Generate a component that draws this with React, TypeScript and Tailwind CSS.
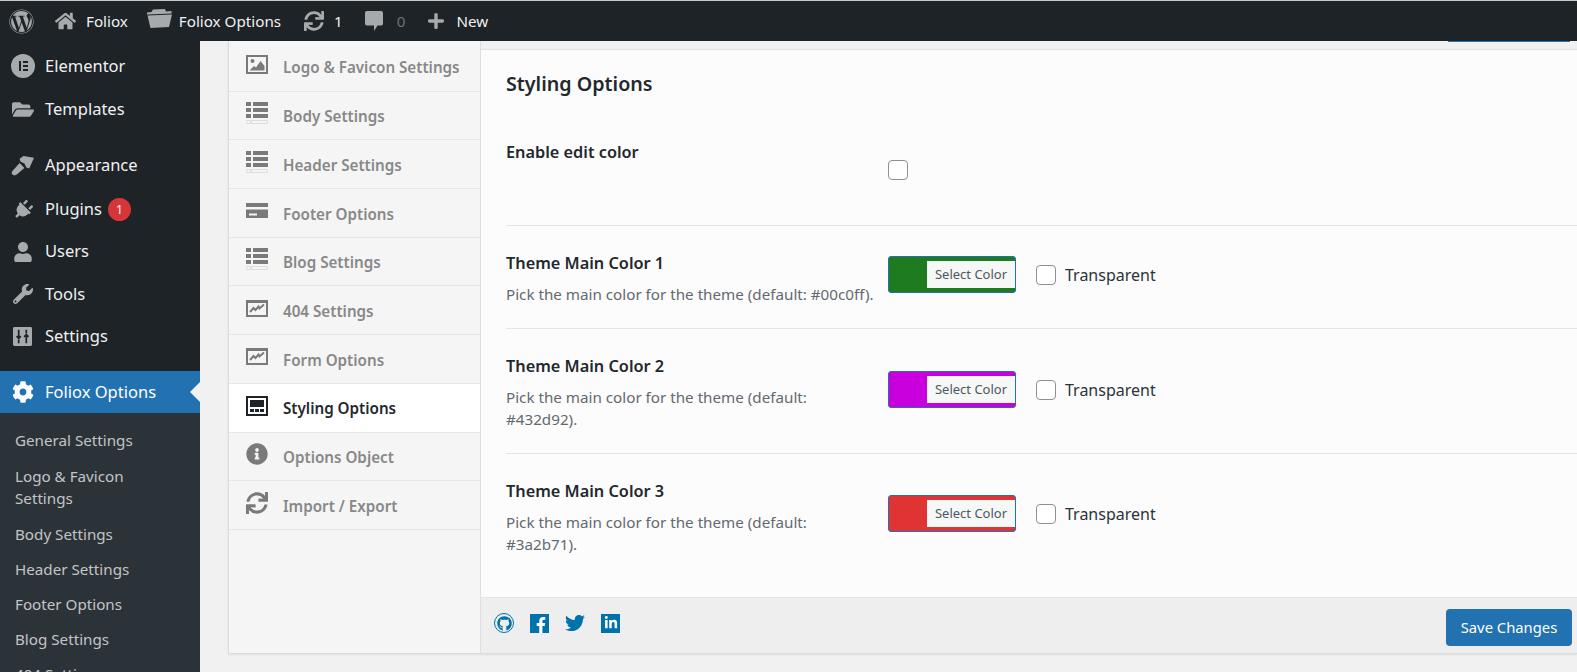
import type { ReactNode } from "react"
import {
  FaWordpress,
  FaHome,
  FaFolderOpen,
  FaSync,
  FaPlus,
  FaPlug,
  FaUser,
  FaWrench,
  FaCog,
  FaInfoCircle,
  FaTwitter,
  FaFacebookF,
  FaLinkedinIn,
  FaGithub,
} from "react-icons/fa"

function ElementorIcon() {
  return (
    <svg viewBox="0 0 24 24" className="h-6 w-6" fill="currentColor">
      <path
        fillRule="evenodd"
        d="M12 0a12 12 0 1 0 0 24 12 12 0 0 0 0-24ZM8 7h2v10H8V7Zm4 0h5v2h-5V7Zm0 4h5v2h-5v-2Zm0 4h5v2h-5v-2Z"
      />
    </svg>
  )
}

function BrushIcon() {
  return (
    <svg viewBox="0 0 24 24" className="h-[23px] w-[23px]" fill="currentColor">
      <path d="M13 2 24 4l-5 11-3-1-2-4-4-2-1-3z" />
      <path d="M9 9.500 14 14.500 6 21.500c-1.500 1.200-3.500 1-4.500 0s-1-2.800.2-4z" />
    </svg>
  )
}

function FolderIcon() {
  return (
    <svg viewBox="0 0 25 19" className="mr-[7px] h-[19px] w-[25px] -translate-y-[2px]" fill="currentColor">
      <path d="M0 3.500 4.500 3 6 .5 18 0l1 2.500 5.500-.5v2.500L0 5.500z" />
      <path d="M.5 6.500 25 5.500 22 18 3.500 19z" />
    </svg>
  )
}

function CommentIcon() {
  return (
    <svg viewBox="0 0 20 24" className="mr-[14px] h-[22px] w-[18px]" fill="currentColor">
      <path d="M2 1h16a2 2 0 0 1 2 2v12a2 2 0 0 1-2 2h-4l-4 6v-6H2a2 2 0 0 1-2-2V3a2 2 0 0 1 2-2z" />
    </svg>
  )
}

function SlidersIcon() {
  return (
    <svg viewBox="0 0 20 20" className="h-[19px] w-[19px]">
      <rect width="20" height="20" rx="1.500" fill="currentColor" />
      <path d="M6 3v9M3.800 9.600 6 12l2.200-2.400M6 13.500v3.500M14 17V8M11.800 10.400 14 8l2.200 2.400M14 6.500V3" stroke="#1d2327" strokeWidth="1.800" fill="none" />
    </svg>
  )
}

function PictureIcon() {
  return (
    <svg viewBox="0 0 22 19" className="h-[19px] w-[22px]" fill="currentColor">
      <path fillRule="evenodd" d="M0 0h22v19H0V0Zm2 2v15h18V2H2Z" />
      <circle cx="6.500" cy="6" r="2" />
      <path d="M3.500 15.500 8 11l2 1.500L14.500 6l4 5v4.500h-15Z" />
    </svg>
  )
}

function ListIcon() {
  return (
    <svg viewBox="0 0 22 23" className="h-[23px] w-[22px]">
      <path d="M0 0h5v4H0zM7 0h15v4H7zM0 6h5v4H0zM7 6h15v4H7zM0 12h5v4H0zM7 12h15v4H7z" fill="currentColor" />
      <path d="M.5 18.500h4v3h-4zM5.500 18.500h16v3h-16z" fill="none" stroke="#dddddd" />
    </svg>
  )
}

function CardIcon() {
  return (
    <svg viewBox="0 0 22 15" className="h-[15px] w-[22px]" fill="currentColor">
      <path d="M0 0h22v4H0zM0 6.500h22V15H0zM3 10.500v2h8v-2z" fillRule="evenodd" />
    </svg>
  )
}

function ChartIcon() {
  return (
    <svg viewBox="0 0 22 17" className="h-[17px] w-[22px]" fill="currentColor">
      <path fillRule="evenodd" d="M0 0h22v17H0V0Zm2 3v12h18V3H2Z" />
      <path d="m4 12 3.500-4 2 2 3-3.500 1 2L18 4.500" fill="none" stroke="currentColor" strokeWidth="2" />
    </svg>
  )
}

function LayoutIcon() {
  return (
    <svg viewBox="0 0 22 20" className="h-5 w-[22px]" fill="currentColor">
      <path fillRule="evenodd" d="M0 0h22v20H0V0Zm2 2v16h18V2H2Z" />
      <path d="M4 4h14v7H4zM4 13h4v3H4zM9 13h4v3H9zM14 13h4v3h-4z" />
    </svg>
  )
}

function TopItem({ icon, label, muted }: { icon: ReactNode; label: string; muted?: boolean }) {
  return (
    <div className="flex items-center text-[#a7aaad]">
      {icon}
      <span className={`pt-px text-[15.200px] ${muted ? "text-[#6d7278]" : "text-[#f0f0f1]"}`}>{label}</span>
    </div>
  )
}

const adminMenu = [
  { label: "Elementor", icon: <ElementorIcon />, row: "" },
  { label: "Templates", icon: <FaFolderOpen className="h-[21px] w-[22px]" />, row: "mb-[14px] pt-[2px]" },
  { label: "Appearance", icon: <BrushIcon />, row: "" },
  { label: "Plugins", icon: <FaPlug className="h-5 w-5 rotate-45" />, badge: 1, row: "pt-[4px]" },
  { label: "Users", icon: <FaUser className="h-5 w-5" />, row: "pt-[3px]" },
  { label: "Tools", icon: <FaWrench className="h-5 w-5" />, row: "pt-[3px]" },
  { label: "Settings", icon: <SlidersIcon />, row: "mb-[14px] pt-[3px]" },
]

const subMenu = [
  { label: "General Settings", cls: "h-[36px]" },
  { label: "Logo & Favicon Settings", cls: "h-[58px] w-[140px]" },
  { label: "Body Settings", cls: "h-[35px]" },
  { label: "Header Settings", cls: "h-[35px]" },
  { label: "Footer Options", cls: "h-[35px]" },
  { label: "Blog Settings", cls: "h-[35px]" },
  { label: "404 Settings", cls: "h-[35px]" },
]

const optionTabs = [
  { label: "Logo & Favicon Settings", icon: <PictureIcon /> },
  { label: "Body Settings", icon: <ListIcon /> },
  { label: "Header Settings", icon: <ListIcon /> },
  { label: "Footer Options", icon: <CardIcon /> },
  { label: "Blog Settings", icon: <ListIcon /> },
  { label: "404 Settings", icon: <ChartIcon /> },
  { label: "Form Options", icon: <ChartIcon /> },
  { label: "Styling Options", icon: <LayoutIcon />, active: true },
  { label: "Options Object", icon: <FaInfoCircle className="h-[22px] w-[22px]" /> },
  { label: "Import / Export", icon: <FaSync className="h-[22px] w-[22px]" /> },
]

const colors = [
  { title: "Theme Main Color 1", lines: ["Pick the main color for the theme (default: #00c0ff)."], color: "bg-[#1e7b20]", rowCls: "h-[103px] pt-[25px]", pickerCls: "mt-[5px]" },
  { title: "Theme Main Color 2", lines: ["Pick the main color for the theme (default:", "#432d92)."], color: "bg-[#c900dd]", rowCls: "h-[125px] pt-[25px]", pickerCls: "mt-[17px]" },
  { title: "Theme Main Color 3", lines: ["Pick the main color for the theme (default:", "#3a2b71)."], color: "bg-[#e03333]", rowCls: "h-[124px] pt-[25px]", pickerCls: "mt-[16px]" },
]

function CheckBox() {
  return <span className="block h-5 w-5 shrink-0 rounded-[4px] border border-[#8c8f94] bg-white" />
}

export default function App() {
  return (
    <div className="flex h-[672px] w-[1577px] flex-col overflow-hidden bg-[#f1f1f1] font-['Noto_Sans',sans-serif]">
      <div className="h-px bg-[#c8c8c8]" />

      {/* admin bar */}
      <div className="flex h-10 shrink-0 items-center bg-[#1d2327] pl-[9px]">
        <FaWordpress className="mr-[21px] h-[25px] w-[25px] text-[#a7aaad]" />
        <TopItem icon={<FaHome className="mr-[10px] h-5 w-[21px]" />} label="Foliox" />
        <div className="ml-[19px]">
          <TopItem icon={<FolderIcon />} label="Foliox Options" />
        </div>
        <div className="ml-[22px]">
          <TopItem icon={<FaSync className="mr-[9px] h-5 w-[22px]" />} label="1" />
        </div>
        <div className="ml-[22px]">
          <TopItem icon={<CommentIcon />} label="0" muted />
        </div>
        <div className="ml-[22px]">
          <TopItem icon={<FaPlus className="mr-[11px] h-[18px] w-[18px]" />} label="New" />
        </div>
      </div>

      <div className="flex min-h-0 flex-1">
        {/* wp sidebar */}
        <aside className="w-[200px] shrink-0 bg-[#1d2327] pt-[4px] text-[#f0f0f1]">
          {adminMenu.map((item) => (
            <div key={item.label} className={`flex h-[42.500px] items-center ${item.row}`}>
              <span className="flex w-[45px] justify-center text-[#a7aaad]">{item.icon}</span>
              <span className="text-[16.500px]">{item.label}</span>
              {item.badge && (
                <span className="ml-[6px] flex h-[23px] w-[23px] items-center justify-center rounded-full bg-[#d63638] text-[12px] text-white">
                  {item.badge}
                </span>
              )}
            </div>
          ))}
          <div className="relative flex h-[42px] items-center bg-[#2271b1] text-white">
            <span className="flex w-[45px] justify-center">
              <FaCog className="h-[22px] w-[22px]" />
            </span>
            <span className="pt-px text-[16.500px]">Foliox Options</span>
            <span className="absolute right-0 top-[11px] h-0 w-0 border-y-[10px] border-r-[10px] border-y-transparent border-r-[#f1f1f1]" />
          </div>
          <div className="bg-[#2c3338] pt-[16px] pl-[15px] text-[15.200px] leading-[22px] text-[#c3c4c7]">
            {subMenu.map((item) => (
              <div key={item.label} className={item.cls}>
                {item.label}
              </div>
            ))}
          </div>
        </aside>

        {/* options panel */}
        <div className="ml-[28px] flex h-[613px] flex-1 border-b border-l border-[#dcdcdc] shadow-[0_1px_2px_rgba(0,0,0,0.08)]">
          <nav className="w-[251px] shrink-0 bg-[#f5f5f5] pt-[2px] text-[#7a7a7a]">
            {optionTabs.map((tab) => (
              <div
                key={tab.label}
                className={`flex h-[48.700px] items-center border-b border-[#e7e7e7] pl-[17px] ${
                  tab.active ? "bg-white text-[#1d2327]" : ""
                }`}
              >
                <span className="flex w-[37px] shrink-0 -translate-y-[2px] justify-start">{tab.icon}</span>
                <span className={`pt-[2px] text-[15.200px] font-semibold ${tab.active ? "text-[#23282d]" : "text-[#888888]"}`}>{tab.label}</span>
              </div>
            ))}
          </nav>

          <main className="flex min-w-0 flex-1 flex-col border-l border-[#dedede] bg-[#f1f1f1]">
            <div className="relative h-[9px] shrink-0 border-b-[1.500px] border-[#e2e2e2]">
              <span className="absolute right-[7px] top-0 h-px w-[122px] bg-[#2271b1]" />
            </div>
            <div className="flex min-h-0 flex-1 flex-col bg-[#fcfcfc] pl-[25px]">
              <h2 className="mt-[19px] text-[19.700px] font-semibold leading-[30px] text-[#23282d]">Styling Options</h2>
              <div className="mt-[38px] flex h-[89px] border-b border-[#e5e5e5] pt-[3px]">
                <div className="w-[382px] text-[16.300px] font-semibold leading-6 text-[#23282d]">Enable edit color</div>
                <div className="mt-[20px]">
                  <CheckBox />
                </div>
              </div>
              {colors.map((row, i) => (
                <div key={row.title} className={`flex ${row.rowCls} ${i < 2 ? "border-b border-[#e5e5e5]" : ""}`}>
                  <div className="w-[382px] shrink-0">
                    <div className="text-[16.300px] font-semibold leading-6 text-[#23282d]">{row.title}</div>
                    <div className="mt-[8px] whitespace-nowrap text-[15.200px] leading-[22px] text-[#646970]">
                      {row.lines.map((line) => (
                        <div key={line}>{line}</div>
                      ))}
                    </div>
                  </div>
                  <div className={`flex h-[37px] items-center ${row.pickerCls}`}>
                    <div className={`flex h-[37px] w-[128px] items-center justify-end rounded-[3px] border border-[#2271b1] ${row.color}`}>
                      <span className="flex h-[27px] w-[88px] items-center justify-center bg-[#f6f7f7] text-[13px] text-[#50575e]">
                        Select Color
                      </span>
                    </div>
                    <div className="ml-5">
                      <CheckBox />
                    </div>
                    <span className="ml-[9px] text-[16px] text-[#2c3338]">Transparent</span>
                  </div>
                </div>
              ))}
            </div>
            <footer className="flex h-14 shrink-0 items-start justify-between border-t border-[#e5e5e5] bg-[#eeeeee] pl-[13px] pr-[5px] pt-[11px]">
              <div className="flex items-center gap-[16px] pt-[4px] text-[#0073aa]">
                <span className="flex h-5 w-5 items-center justify-center rounded-full border-[1.500px] border-[#0073aa]">
                  <FaGithub className="h-[15px] w-[15px]" />
                </span>
                <span className="flex h-[19px] w-[19px] items-end justify-end bg-[#0073aa] pr-[3px] text-white">
                  <FaFacebookF className="h-[16px] w-[10px]" />
                </span>
                <FaTwitter className="h-5 w-5" />
                <span className="flex h-[19px] w-[19px] items-center justify-center bg-[#0073aa] text-white">
                  <FaLinkedinIn className="h-[14px] w-[14px]" />
                </span>
              </div>
              <button className="flex h-[37px] w-[126px] items-center justify-center rounded-[4px] bg-[#2271b1] pb-px text-[14.800px] text-white">
                Save Changes
              </button>
            </footer>
          </main>
        </div>
      </div>
    </div>
  )
}
